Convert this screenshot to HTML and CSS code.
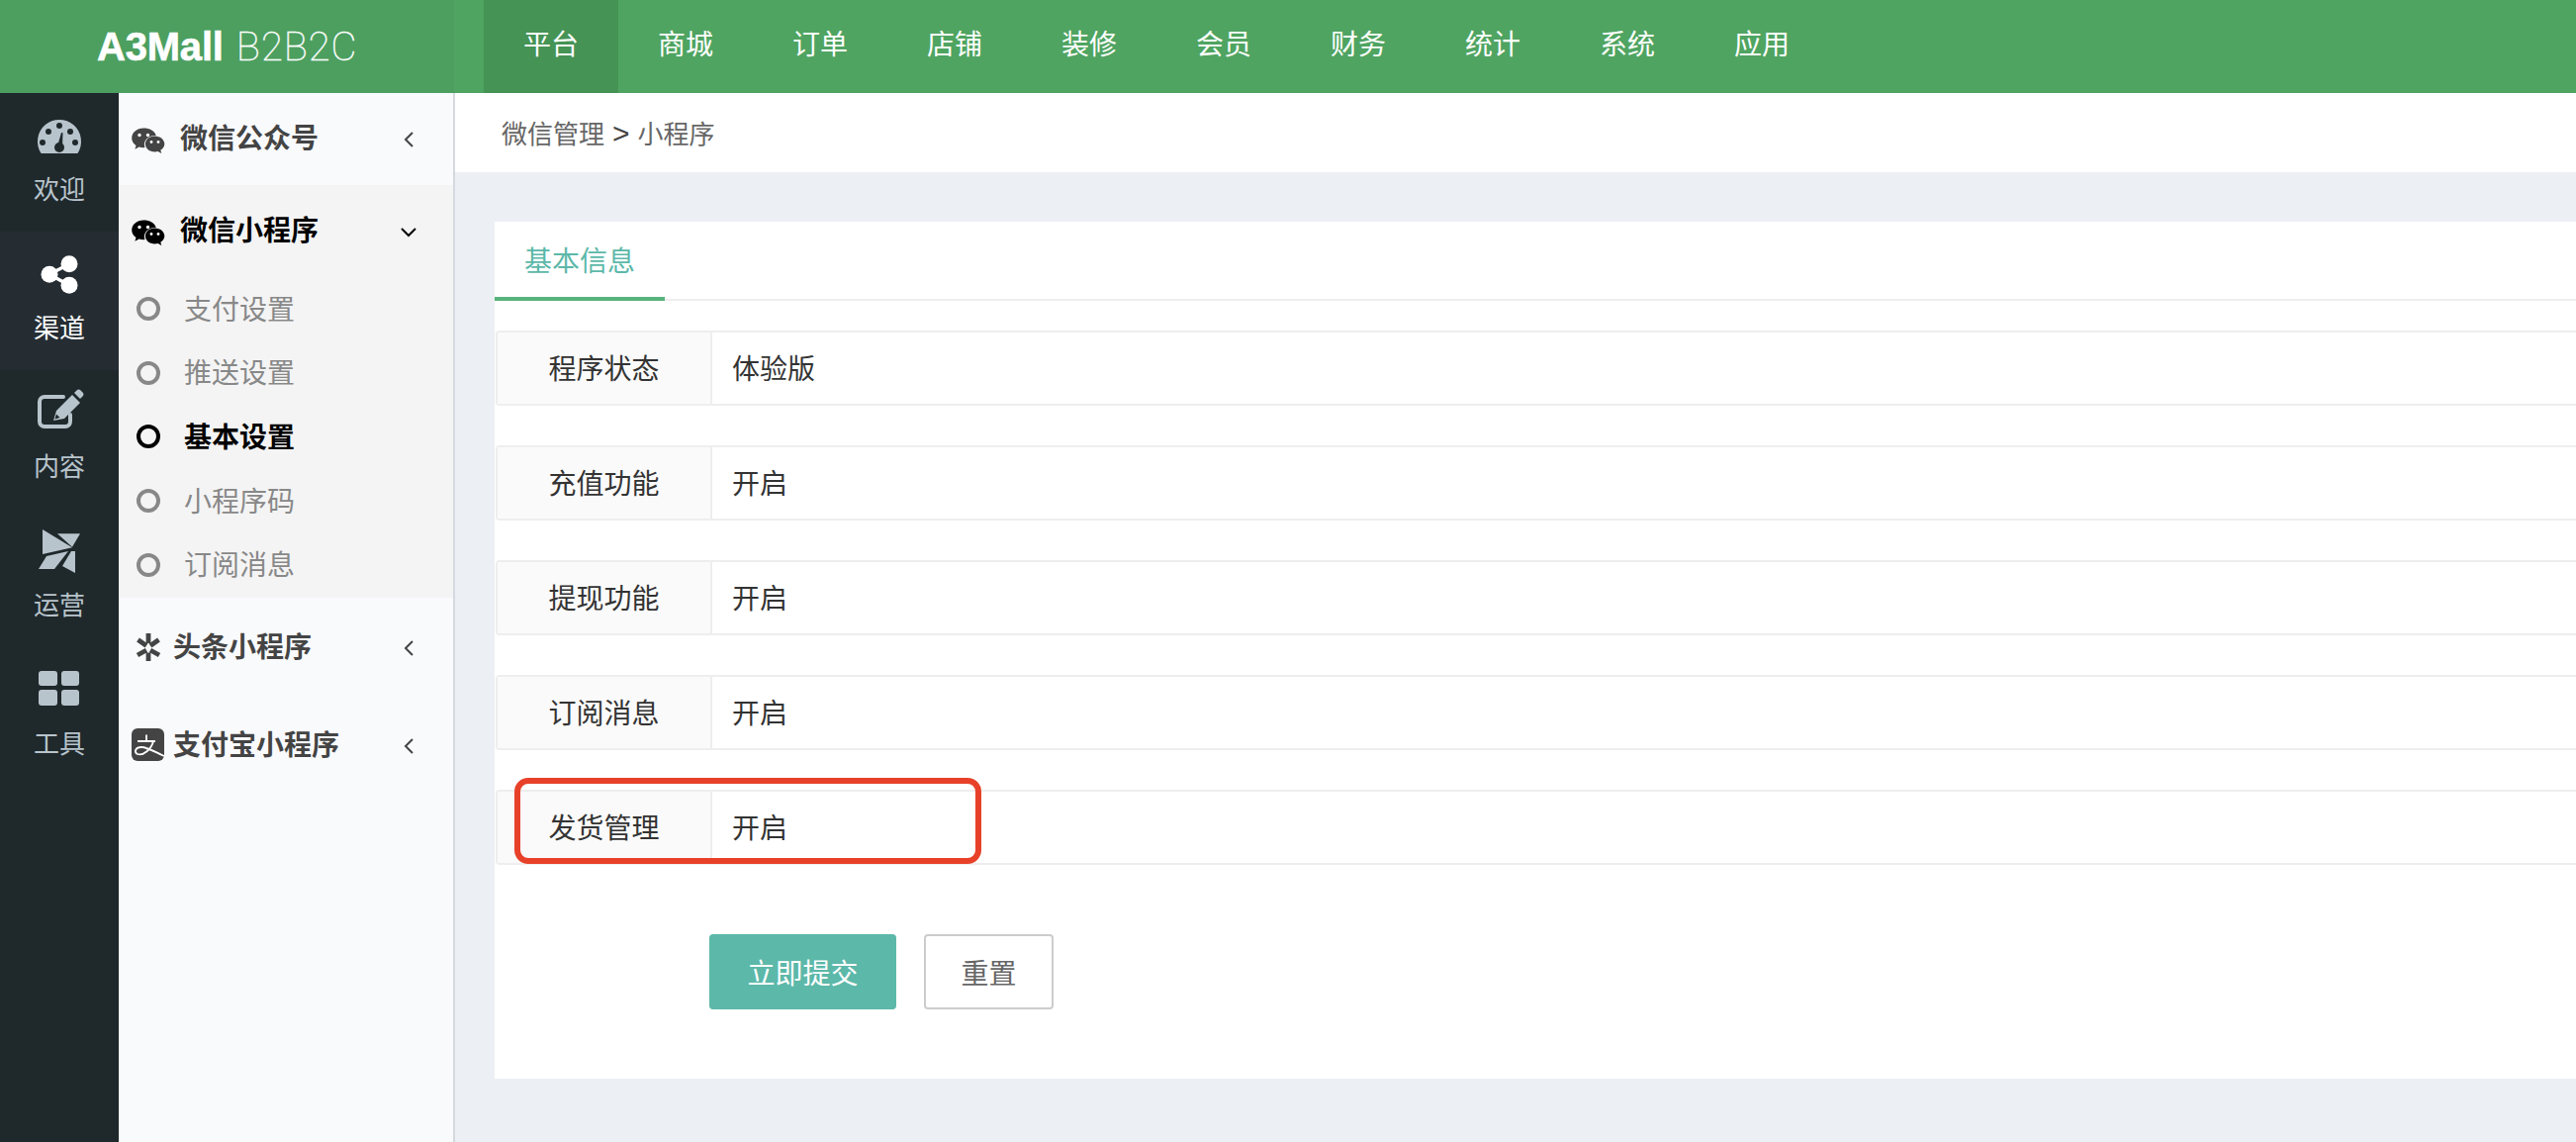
FILE: index.html
```html
<!DOCTYPE html>
<html lang="zh-CN">
<head>
<meta charset="utf-8">
<title>A3Mall B2B2C</title>
<link rel="stylesheet" href="styles.css">
</head>
<body>
<svg class="defs" width="0" height="0" aria-hidden="true">
  <defs>
    <symbol id="wechat" viewBox="0 0 50 40">
      <path d="M20 8.500c-6.600 0-11.800 4.400-11.800 10 0 3.100 1.600 5.800 4.300 7.600l-1.100 3.700 4.200-2.200c1.300.4 2.800.6 4.400.6l1.500-.1c-.4-1-.6-2-.6-3.100 0-5 4.700-9 10.700-9h1.100C31.500 11 26.200 8.500 20 8.500z" fill="currentColor"/>
      <path d="M31.500 16.500c-5.200 0-9.600 3.600-9.600 8s4.400 8 9.600 8c1.100 0 2.100-.2 3.100-.5l3.700 2-1-3.300c2.400-1.400 4-3.700 4-6.200 0-4.400-4.500-8-9.800-8z" fill="currentColor"/>
      <circle cx="16" cy="15.500" r="1.700" class="eye-light"/><circle cx="24.500" cy="15.500" r="1.700" class="eye-light"/>
      <circle cx="28" cy="22.500" r="1.400" class="eye-light"/><circle cx="35" cy="22.500" r="1.400" class="eye-light"/>
    </symbol>
    <symbol id="chev-left" viewBox="0 0 20 20"><path d="M14 3 7 10l7 7" fill="none" stroke="currentColor" stroke-width="2"/></symbol>
    <symbol id="chev-down" viewBox="0 0 20 20"><path d="M3 7l7 7 7-7" fill="none" stroke="currentColor" stroke-width="2"/></symbol>
  </defs>
</svg>

<header class="topbar">
  <div class="logo"><b class="logo-main">A3Mall</b> <span class="logo-sub">B2B2C</span></div>
  <nav class="topnav">
    <a class="topnav-item is-active">平台</a>
    <a class="topnav-item">商城</a>
    <a class="topnav-item">订单</a>
    <a class="topnav-item">店铺</a>
    <a class="topnav-item">装修</a>
    <a class="topnav-item">会员</a>
    <a class="topnav-item">财务</a>
    <a class="topnav-item">统计</a>
    <a class="topnav-item">系统</a>
    <a class="topnav-item">应用</a>
  </nav>
</header>

<div class="layout">
  <aside class="rail">
    <a class="rail-item">
      <svg class="rail-icon" viewBox="0 0 60 50"><path d="M11.600 50A22 22 0 1 1 48.400 50Z" fill="#b8c4cc"/><g fill="#1f282b"><circle cx="19" cy="28" r="3"/><circle cx="30" cy="22" r="3"/><circle cx="41" cy="28" r="3"/><circle cx="46" cy="39" r="3"/><circle cx="13" cy="39" r="3"/><circle cx="30" cy="44" r="5"/><path d="M28 43l4-14 1.500.3L33 44z"/></g></svg>
      <span class="rail-label">欢迎</span>
    </a>
    <a class="rail-item is-active">
      <svg class="rail-icon" viewBox="0 0 60 50"><path d="M40 21.700 20 32.300l20 11" fill="none" stroke="#fff" stroke-width="3.500"/><circle cx="40" cy="21.700" r="8.500" fill="#fff"/><circle cx="20" cy="32.300" r="8.500" fill="#fff"/><circle cx="40" cy="43.300" r="8.500" fill="#fff"/></svg>
      <span class="rail-label">渠道</span>
    </a>
    <a class="rail-item">
      <svg class="rail-icon" viewBox="0 0 60 50"><path d="M34 16H15a5 5 0 0 0-5 5v20a5 5 0 0 0 5 5h21a5 5 0 0 0 5-5v-7" fill="none" stroke="#b8c4cc" stroke-width="4" stroke-linecap="round"/><path d="M24 40l3-10 16-16 8 8-16 16z" fill="#b8c4cc"/><path d="M25.500 38.500l1.500-5 3.500 3.500z" fill="#1f282b"/><path d="M45 12l3-3q1.500-1 3 0l3 3q1 1.500 0 3l-3 3z" fill="#b8c4cc"/></svg>
      <span class="rail-label">内容</span>
    </a>
    <a class="rail-item">
      <svg class="rail-icon" viewBox="0 0 60 50"><g fill="#b8c4cc"><path d="M13 10 43 28.300 13 35z"/><path d="M28 14.300H51L43 27.700z"/><path d="M17 37 39 32 25 50H9z"/><path d="M42 32h4V54L33 47z"/></g></svg>
      <span class="rail-label">运营</span>
    </a>
    <a class="rail-item">
      <svg class="rail-icon" viewBox="0 0 60 50"><g fill="#b8c4cc"><rect x="9" y="13" width="19" height="15" rx="3"/><rect x="32" y="13" width="18" height="15" rx="3"/><rect x="9" y="32" width="19" height="16" rx="3"/><rect x="32" y="32" width="18" height="16" rx="3"/></g></svg>
      <span class="rail-label">工具</span>
    </a>
  </aside>

  <aside class="side">
    <div class="side-head side-head-first">
      <svg class="side-icon"><use href="#wechat"/></svg>
      <span class="side-title side-title-gap">微信公众号</span>
      <svg class="side-chev"><use href="#chev-left"/></svg>
    </div>
    <div class="side-open">
      <div class="side-head side-head-open">
        <svg class="side-icon"><use href="#wechat"/></svg>
        <span class="side-title side-title-gap">微信小程序</span>
        <svg class="side-chev"><use href="#chev-down"/></svg>
      </div>
      <ul class="side-list">
        <li class="side-sub"><i class="ring"></i>支付设置</li>
        <li class="side-sub"><i class="ring"></i>推送设置</li>
        <li class="side-sub is-active"><i class="ring"></i>基本设置</li>
        <li class="side-sub"><i class="ring"></i>小程序码</li>
        <li class="side-sub"><i class="ring"></i>订阅消息</li>
      </ul>
    </div>
    <div class="side-head side-head-tall">
      <svg class="side-icon" viewBox="0 0 50 40"><path d="M25 5V15M25 24.500V33M14.500 11.500l8.500 6M35.500 11.500l-8.500 6M14 27l9-5M36 27l-9-5" fill="none" stroke="#444" stroke-width="4.800"/></svg>
      <span class="side-title">头条小程序</span>
      <svg class="side-chev"><use href="#chev-left"/></svg>
    </div>
    <div class="side-head side-head-tall">
      <svg class="side-icon" viewBox="0 0 50 40"><rect x="8" y="2" width="33" height="33" rx="6" fill="#444"/><path d="M14 15H32M23 8.500V15M30 15C28 23 20 30 14 28C10 26 12 21 18 21C24 21 32 26 41 30" fill="none" stroke="#fff" stroke-width="1.800"/></svg>
      <span class="side-title">支付宝小程序</span>
      <svg class="side-chev"><use href="#chev-left"/></svg>
    </div>
  </aside>

  <main class="main">
    <div class="crumb">微信管理<span class="crumb-sep">&gt;</span>小程序</div>
    <section class="card">
      <div class="tabs"><div class="tab">基本信息</div></div>
      <form class="form">
        <div class="row"><div class="row-label">程序状态</div><div class="row-value">体验版</div></div>
        <div class="row"><div class="row-label">充值功能</div><div class="row-value">开启</div></div>
        <div class="row"><div class="row-label">提现功能</div><div class="row-value">开启</div></div>
        <div class="row"><div class="row-label">订阅消息</div><div class="row-value">开启</div></div>
        <div class="row"><div class="row-label">发货管理</div><div class="row-value">开启</div><div class="highlight"></div></div>
        <div class="actions">
          <button type="button" class="btn btn-primary">立即提交</button>
          <button type="button" class="btn btn-plain">重置</button>
        </div>
      </form>
    </section>
  </main>
</div>
</body>
</html>
```

FILE: styles.css
```css
* { box-sizing: border-box; }
html, body { margin: 0; height: 100%; overflow: hidden; }
body {
  font-family: "Liberation Sans", "Noto Sans CJK SC", sans-serif;
  font-size: 28px;
  color: #333;
  background: #eceff4;
}
.defs { position: absolute; }
.eye-light { fill: #fff; }

.topbar { display: flex; height: 94px; background: #4fa461; color: #fff; }
.logo {
  width: 459px;
  padding-left: 98px;
  background: #4c9f5f;
  line-height: 94px;
  font-size: 40px;
  white-space: nowrap;
}
.logo-main { letter-spacing: -0.2px; font-weight: 700; -webkit-text-stroke: 0.6px #fff; }
.logo-sub {
  font-family: Roboto, "Liberation Sans", sans-serif;
  font-weight: 100;
  margin-left: 2px;
  letter-spacing: 0.9px;
  -webkit-text-stroke: 0.4px #fff;
}
.topnav { display: flex; margin-left: 30px; }
.topnav-item { width: 136px; text-align: center; line-height: 92px; font-size: 28px; }
.topnav-item.is-active { background: #459355; }

.layout { display: flex; height: 1060px; }
.rail { width: 120px; flex: none; background: #1f282b; }
.rail-item { display: block; height: 140px; padding-top: 11px; text-align: center; color: #b8c4cc; }
.rail-item.is-active { background: #252d33; color: #fff; }
.rail-icon { display: block; width: 60px; height: 50px; margin: 0 auto; overflow: visible; }
.rail-label { display: block; margin-top: 19px; font-size: 26px; line-height: 36px; }

.side { width: 340px; flex: none; background: #f9fafc; border-right: 2px solid #d5d9e0; }
.side-head { display: flex; align-items: center; padding: 0 35px 0 5px; color: #444; font-weight: 700; }
.side-head-first { height: 93px; }
.side-head-open { height: 93px; color: #000; }
.side-head-tall { height: 99px; padding-top: 3px; }
.side-icon { width: 50px; height: 40px; flex: none; }
.side-title { font-size: 28px; line-height: 40px; white-space: nowrap; }
.side-title-gap { margin-left: 7px; }
.side-chev { width: 20px; height: 20px; margin-left: auto; flex: none; }
.side-open { background: #f4f4f4; height: 417px; }
.side-list { list-style: none; margin: 0; padding: 0; }
.side-sub {
  display: flex;
  align-items: center;
  height: 64.6px;
  padding-left: 18px;
  padding-bottom: 3px;
  color: #888;
  font-size: 28px;
}
.ring {
  width: 24px;
  height: 24px;
  margin-top: 3px;
  margin-right: 24px;
  border: 4px solid #888;
  border-radius: 50%;
  flex: none;
}
.side-sub.is-active { color: #000; font-weight: 700; }
.side-sub.is-active .ring { border-color: #000; }

.main { flex: 1; min-width: 0; }
.crumb { height: 80px; padding: 2px 0 0 47px; background: #fff; color: #666; font-size: 26px; line-height: 78px; }
.crumb-sep { margin: 0 8px; font-size: 30px; color: #444; }
.card { height: 866px; margin: 50px 0 0 40px; background: #fff; }
.tabs { height: 80px; border-bottom: 2px solid #eee; }
.tab {
  width: 172px;
  height: 80px;
  padding-top: 6px;
  border-bottom: 4px solid #57b37b;
  color: #5cb8a9;
  font-size: 28px;
  line-height: 70px;
  text-align: center;
}
.form { padding: 30px 0 0 1px; }
.row {
  position: relative;
  display: flex;
  height: 76px;
  margin-bottom: 40px;
  border: 2px solid #eee;
  border-right: 0;
  border-radius: 4px 0 0 4px;
  font-size: 28px;
  line-height: 68px;
  color: #333;
}
.row-label { width: 217px; padding-top: 4px; text-align: center; background: #fafafa; border-right: 2px solid #eee; }
.row-value { padding: 4px 0 0 20px; }
.highlight {
  position: absolute;
  left: 17px;
  top: -14px;
  width: 472px;
  height: 87px;
  border: 6px solid #e8412a;
  border-radius: 14px;
}
.actions { display: flex; gap: 28px; margin-top: 70px; padding-left: 216px; }
.btn { height: 76px; border-radius: 4px; font: inherit; font-size: 28px; padding: 0; }
.btn-primary { width: 189px; border: 0; background: #5cb8a9; color: #fff; }
.btn-plain { width: 131px; border: 2px solid #ccc; background: #fff; color: #666; }
```
